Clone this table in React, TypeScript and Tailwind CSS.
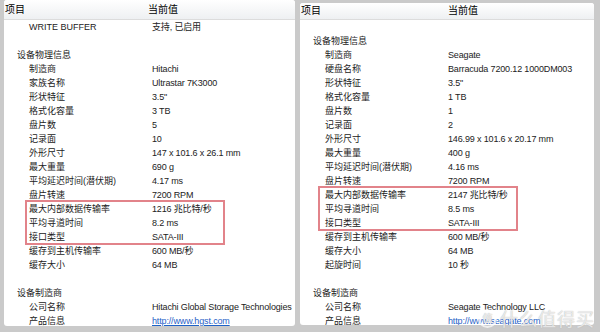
import React from 'react';

type Row = { label?: string; value?: string; level?: 0 | 1; link?: boolean; mark?: boolean };

const leftRows: Row[] = [
  { label: 'WRITE BUFFER', value: '支持, 已启用', level: 1 },
  {},
  { label: '设备物理信息', level: 0 },
  { label: '制造商', value: 'Hitachi', level: 1 },
  { label: '家族名称', value: 'Ultrastar 7K3000', level: 1 },
  { label: '形状特征', value: '3.5"', level: 1 },
  { label: '格式化容量', value: '3 TB', level: 1 },
  { label: '盘片数', value: '5', level: 1 },
  { label: '记录面', value: '10', level: 1 },
  { label: '外形尺寸', value: '147 x 101.6 x 26.1 mm', level: 1 },
  { label: '最大重量', value: '690 g', level: 1 },
  { label: '平均延迟时间(潜伏期)', value: '4.17 ms', level: 1 },
  { label: '盘片转速', value: '7200 RPM', level: 1 },
  { label: '最大内部数据传输率', value: '1216 兆比特/秒', level: 1, mark: true },
  { label: '平均寻道时间', value: '8.2 ms', level: 1, mark: true },
  { label: '接口类型', value: 'SATA-III', level: 1, mark: true },
  { label: '缓存到主机传输率', value: '600 MB/秒', level: 1 },
  { label: '缓存大小', value: '64 MB', level: 1 },
  {},
  { label: '设备制造商', level: 0 },
  { label: '公司名称', value: 'Hitachi Global Storage Technologies', level: 1 },
  { label: '产品信息', value: 'http://www.hgst.com', level: 1, link: true },
];

const rightRows: Row[] = [
  {},
  { label: '设备物理信息', level: 0 },
  { label: '制造商', value: 'Seagate', level: 1 },
  { label: '硬盘名称', value: 'Barracuda 7200.12 1000DM003', level: 1 },
  { label: '形状特征', value: '3.5"', level: 1 },
  { label: '格式化容量', value: '1 TB', level: 1 },
  { label: '盘片数', value: '1', level: 1 },
  { label: '记录面', value: '2', level: 1 },
  { label: '外形尺寸', value: '146.99 x 101.6 x 20.17 mm', level: 1 },
  { label: '最大重量', value: '400 g', level: 1 },
  { label: '平均延迟时间(潜伏期)', value: '4.16 ms', level: 1 },
  { label: '盘片转速', value: '7200 RPM', level: 1 },
  { label: '最大内部数据传输率', value: '2147 兆比特/秒', level: 1, mark: true },
  { label: '平均寻道时间', value: '8.5 ms', level: 1, mark: true },
  { label: '接口类型', value: 'SATA-III', level: 1, mark: true },
  { label: '缓存到主机传输率', value: '600 MB/秒', level: 1 },
  { label: '缓存大小', value: '64 MB', level: 1 },
  { label: '起旋时间', value: '10 秒', level: 1 },
  {},
  { label: '设备制造商', level: 0 },
  { label: '公司名称', value: 'Seagate Technology LLC', level: 1 },
  { label: '产品信息', value: 'http://www.seagate.com', level: 1, link: true },
];

const font = { fontFamily: '"Liberation Sans", "Noto Sans CJK SC", sans-serif' };

function Line({ row }: { row: Row }) {
  return (
    <div className="flex h-[14px] items-center whitespace-nowrap">
      <div className={`w-[148px] shrink-0 text-[#222] ${row.level === 0 ? 'pl-[13px]' : 'pl-[25px]'}`}>{row.label}</div>
      {row.link ? (
        <div className="tracking-[-0.15px] text-[#1f62c7] underline">{row.value}</div>
      ) : (
        <div className="tracking-[-0.15px] text-[#222]">{row.value}</div>
      )}
    </div>
  );
}

function Panel({ rows, headerH, valueX, boxX, className }: { rows: Row[]; headerH: string; valueX: string; boxX: string; className: string }) {
  const first = rows.findIndex((r) => r.mark);
  const before = rows.slice(0, first);
  const marked = rows.filter((r) => r.mark);
  const after = rows.slice(first + marked.length);
  return (
    <div className={`relative overflow-hidden rounded-[3px] bg-white text-[9px] leading-none ${className}`}>
      <div className={`flex items-center border-b border-[#dcdcdc] bg-gradient-to-b from-white to-[#eef0f2] pl-[1px] text-[10px] text-black ${headerH}`}>
        <div className={`shrink-0 ${valueX}`}>项目</div>
        <div>当前值</div>
      </div>
      {before.map((r, i) => <Line key={'b' + i} row={r} />)}
      <div className="relative">
        {marked.map((r, i) => <Line key={'m' + i} row={r} />)}
        <div className={`absolute top-[-2px] bottom-[-1px] w-[200px] border-2 border-[#e2838a] ${boxX}`} />
      </div>
      {after.map((r, i) => <Line key={'a' + i} row={r} />)}
    </div>
  );
}

export default function App() {
  return (
    <div className="relative flex h-[332px] w-[600px] gap-[5px] overflow-hidden bg-[#cacaca] pl-[4px]" style={font}>
      <Panel rows={leftRows} headerH="h-[20px]" valueX="w-[143px]" boxX="left-[21px]" className="h-[326px] w-[291px]" />
      <Panel rows={rightRows} headerH="h-[17px]" valueX="w-[147px]" boxX="left-[18px]" className="mt-[3px] h-[322px] w-[294px]" />
      <div className="pointer-events-none absolute left-[478px] top-[305px] flex items-center gap-[3px] text-white/70" style={{ textShadow: '0 0 1px #aaa' }}>
        <div className="flex h-[19px] w-[19px] items-center justify-center rounded-full border-2 border-white/70 text-[10px] font-bold">值</div>
        <div className="text-[18px] tracking-[1px]" style={{ fontFamily: '"Noto Sans CJK SC", sans-serif' }}>什么值得买</div>
      </div>
    </div>
  );
}
